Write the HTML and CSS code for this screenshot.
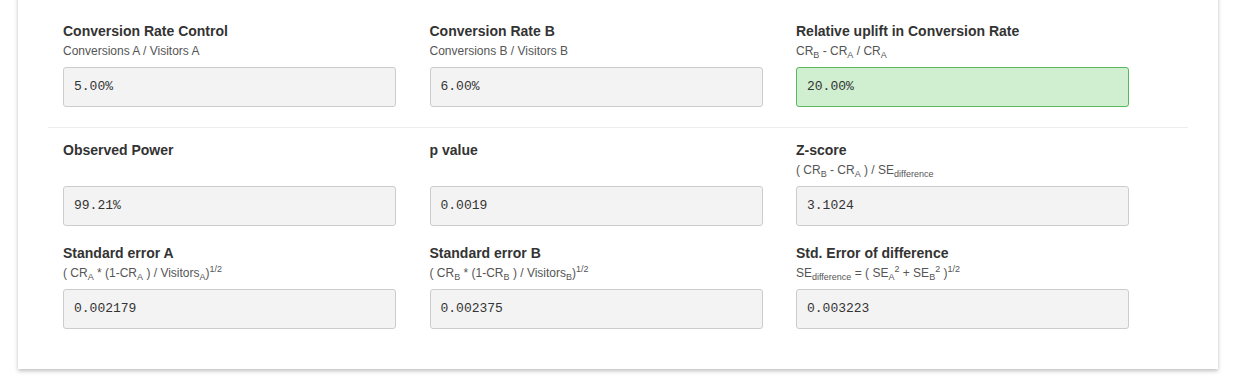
FILE: index.html
```html
<!DOCTYPE html>
<html lang="en">
<head>
  <meta charset="UTF-8">
  <meta name="viewport" content="width=device-width, initial-scale=1.0">
  <title>Results</title>
  <link rel="stylesheet" href="styles.css">
</head>
<body>
  <div class="card">
    <div class="row">
      <div class="field">
        <h4 class="title">Conversion Rate Control</h4>
        <div class="formula">Conversions A / Visitors A</div>
        <div class="value">5.00%</div>
      </div>
      <div class="field">
        <h4 class="title">Conversion Rate B</h4>
        <div class="formula">Conversions B / Visitors B</div>
        <div class="value">6.00%</div>
      </div>
      <div class="field">
        <h4 class="title">Relative uplift in Conversion Rate</h4>
        <div class="formula">CR<sub>B</sub> - CR<sub>A</sub> / CR<sub>A</sub></div>
        <div class="value success">20.00%</div>
      </div>
    </div>

    <hr class="divider">

    <div class="row">
      <div class="field">
        <h4 class="title">Observed Power</h4>
        <div class="formula"></div>
        <div class="value">99.21%</div>
      </div>
      <div class="field">
        <h4 class="title">p value</h4>
        <div class="formula"></div>
        <div class="value">0.0019</div>
      </div>
      <div class="field">
        <h4 class="title">Z-score</h4>
        <div class="formula">( CR<sub>B</sub> - CR<sub>A</sub> ) / SE<sub>difference</sub></div>
        <div class="value">3.1024</div>
      </div>
    </div>

    <div class="row">
      <div class="field">
        <h4 class="title">Standard error A</h4>
        <div class="formula">( CR<sub>A</sub> * (1-CR<sub>A</sub> ) / Visitors<sub>A</sub>)<sup>1/2</sup></div>
        <div class="value">0.002179</div>
      </div>
      <div class="field">
        <h4 class="title">Standard error B</h4>
        <div class="formula">( CR<sub>B</sub> * (1-CR<sub>B</sub> ) / Visitors<sub>B</sub>)<sup>1/2</sup></div>
        <div class="value">0.002375</div>
      </div>
      <div class="field">
        <h4 class="title">Std. Error of difference</h4>
        <div class="formula">SE<sub>difference</sub> = ( SE<sub>A</sub><sup>2</sup> + SE<sub>B</sub><sup>2</sup> )<sup>1/2</sup></div>
        <div class="value">0.003223</div>
      </div>
    </div>
  </div>
</body>
</html>
```
FILE: styles.css
```css
html,
body {
  min-height: 100%;
}

body {
  margin: 0;
  padding-bottom: 40px;
  background-color: #fff;
  font-family: "Liberation Sans", Arial, sans-serif;
  color: #333;
}

.card {
  margin: -6px 17px 0 18px;
  padding: 27px 30px 23px;
  background-color: #fff;
  box-shadow: 0 2px 4px rgba(0, 0, 0, 0.25);
}

.row {
  display: grid;
  grid-template-columns: repeat(3, 333px);
  column-gap: 33.5px;
  padding-left: 15px;
}

.field {
  margin-bottom: 17px;
}

.title {
  margin: 0;
  font-size: 14px;
  font-weight: bold;
  line-height: 20px;
  color: #333;
}

.formula {
  height: 20px;
  margin-bottom: 6px;
  font-size: 12px;
  line-height: 20px;
  color: #555;
}

.formula sub,
.formula sup {
  font-size: 9px;
  line-height: 0;
}

.value {
  box-sizing: border-box;
  height: 40px;
  padding: 0 10px;
  border: 1px solid #ccc;
  border-radius: 3px;
  background-color: #f3f3f3;
  font-family: "Liberation Mono", "Courier New", monospace;
  font-size: 13px;
  line-height: 38px;
  color: #333;
}

.value.success {
  background-color: #d0eed0;
  border-color: #5cb85c;
}

.divider {
  margin: 3px 0 12px;
  border: 0;
  border-top: 1px solid #eee;
}
```
